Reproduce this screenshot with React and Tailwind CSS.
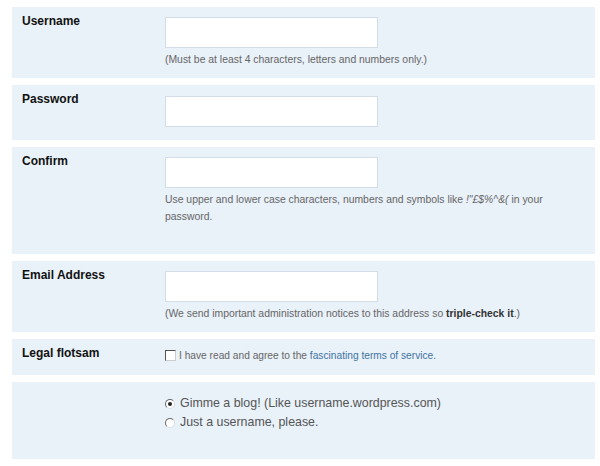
import React from "react";

const Panel = ({ label, children, className = "" }) => (
  <div className={`flex bg-[#e9f1f9] ml-[12px] mr-[5px] ${className}`}>
    <div className="w-[153px] shrink-0 pl-[10px] pt-[7px] text-[12px] leading-[15px] font-bold text-[#111]">
      {label}
    </div>
    <div className="flex-1">{children}</div>
  </div>
);

const Field = () => (
  <div className="w-[213px] h-[31px] bg-white border border-[#d3dde8]" />
);

const Help = ({ children, className = "" }) => (
  <p className={`text-[10.4px] leading-[17px] text-[#666] ${className}`}>{children}</p>
);

export default function App() {
  return (
    <div className="w-[600px] h-[466px] bg-white pt-[7px] flex flex-col gap-[7px] font-['Liberation_Sans',Arial,sans-serif]">
      <Panel label="Username" className="h-[71px]">
        <div className="pt-[10px]">
          <Field />
          <Help className="mt-[3px]">
            (Must be at least 4 characters, letters and numbers only.)
          </Help>
        </div>
      </Panel>

      <Panel label="Password" className="h-[55px]">
        <div className="pt-[11px]">
          <Field />
        </div>
      </Panel>

      <Panel label="Confirm" className="h-[107px]">
        <div className="pt-[10px]">
          <Field />
          <Help className="mt-[3px] whitespace-nowrap">
            Use upper and lower case characters, numbers and symbols like{" "}
            <i>!"£$%^&amp;(</i> in your
            <br />
            password.
          </Help>
        </div>
      </Panel>

      <Panel label="Email Address" className="h-[71px]">
        <div className="pt-[10px]">
          <Field />
          <Help className="mt-[3px]">
            (We send important administration notices to this address so{" "}
            <b className="text-[#333]">triple-check it</b>.)
          </Help>
        </div>
      </Panel>

      <Panel label="Legal flotsam" className="h-[36px]">
        <label className="flex items-center gap-[3px] pt-[9px] text-[10.2px] leading-[15px] text-[#666]">
          <span className="w-[11px] h-[11px] bg-white border border-t-[#555] border-l-[#555] border-b-[#ccc] border-r-[#ccc]" />
          <span>
            I have read and agree to the{" "}
            <a href="#" className="text-[#3f74a3]">
              fascinating terms of service.
            </a>
          </span>
        </label>
      </Panel>

      <Panel label="" className="h-[77px]">
        <div className="pt-[12px] flex flex-col text-[12.4px] leading-[19px] text-[#555]">
          <label className="flex items-center gap-[5px]">
            <span className="w-[10px] h-[10px] rounded-full bg-white border border-t-[#666] border-l-[#666] border-b-[#ddd] border-r-[#ddd] flex items-center justify-center">
              <span className="w-[4px] h-[4px] rounded-full bg-[#222]" />
            </span>
            Gimme a blog! (Like username.wordpress.com)
          </label>
          <label className="flex items-center gap-[5px]">
            <span className="w-[10px] h-[10px] rounded-full bg-white border border-t-[#666] border-l-[#666] border-b-[#ddd] border-r-[#ddd]" />
            Just a username, please.
          </label>
        </div>
      </Panel>
    </div>
  );
}
